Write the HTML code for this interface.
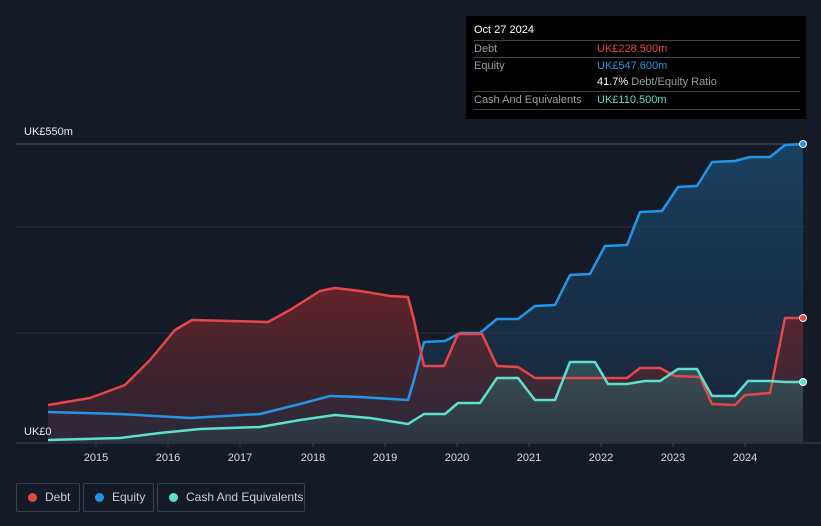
<!DOCTYPE html>
<html><head><meta charset="utf-8"><style>
html,body{margin:0;padding:0;background:#151b26;width:821px;height:526px;overflow:hidden;font-family:"Liberation Sans",sans-serif}
svg{position:absolute;left:0;top:0}
.tt{position:absolute;left:466px;top:16px;width:340px;height:103px;background:#000;color:#fff;font-size:11px}
.tt .row{position:absolute;left:8px;width:326px;border-top:1px solid #444;height:17px;line-height:17px}
.tt .l{color:#9a9ea5;position:absolute;left:0}
.tt .v{position:absolute;left:123px}
.leg{position:absolute;top:483px;height:27px;border:1px solid #3a404a;border-radius:2px;color:#c8ccd2;font-size:12px;line-height:27px}
.leg i{position:absolute;left:11px;top:9px;width:9px;height:9px;border-radius:50%}
.leg span{position:absolute;left:28px}
</style></head><body>
<svg width="821" height="526">
<defs>
<linearGradient id="eg" x1="0" y1="0" x2="0" y2="1"><stop offset="0" stop-color="#1a4a70" stop-opacity="0.8"/><stop offset="1" stop-color="#1a3048" stop-opacity="0.5"/></linearGradient>
<linearGradient id="dg" x1="0" y1="0" x2="0" y2="1"><stop offset="0" stop-color="#6a2328" stop-opacity="0.9"/><stop offset="1" stop-color="#3a2a38" stop-opacity="0.6"/></linearGradient>
<linearGradient id="cg" x1="0" y1="0" x2="0" y2="1"><stop offset="0" stop-color="#3a6a6a" stop-opacity="0.6"/><stop offset="1" stop-color="#2a3c44" stop-opacity="0.6"/></linearGradient>
</defs>
<g stroke="#2c323c" stroke-width="1">
<line x1="16" y1="144" x2="805" y2="144" stroke="#4a5058"/>
<line x1="16" y1="227" x2="805" y2="227"/>
<line x1="16" y1="333" x2="805" y2="333"/>
</g>
<path d="M48,412 L120,414 L190,418 L260,414 L300,404 L330,396 L360,397 L408,400 L414,380 L424,342 L445,341 L460,333 L480,333 L497,319 L518,319 L535,306 L555,305 L570,275 L590,274 L605,246 L627,245 L640,212 L662,211 L678,187 L697,186 L712,162 L735,161 L750,157 L770,157 L785,145 L803,144 L803,442 L48,442Z" fill="url(#eg)"/>
<path d="M48,405 L90,398 L125,385 L150,360 L175,330 L192,320 L230,321 L268,322 L290,310 L320,291 L335,288 L360,291 L390,296 L408,297 L414,320 L424,366 L444,366 L458,334 L482,334 L497,366 L518,367 L535,378 L627,378 L640,368 L660,368 L675,376 L700,377 L712,404 L735,405 L745,395 L770,393 L785,318 L803,318 L803,442 L48,442Z" fill="url(#dg)"/>
<path d="M48,440 L120,438 L160,433 L200,429 L260,427 L300,420 L335,415 L370,418 L408,424 L424,414 L445,414 L458,403 L480,403 L497,378 L518,378 L535,400 L555,400 L570,362 L595,362 L608,384 L627,384 L645,381 L660,381 L678,369 L697,369 L712,396 L735,396 L748,381 L770,381 L785,382 L803,382 L803,442 L48,442Z" fill="url(#cg)"/>
<g fill="none" stroke-width="2.5" stroke-linejoin="round">
<path d="M48,412 L120,414 L190,418 L260,414 L300,404 L330,396 L360,397 L408,400 L414,380 L424,342 L445,341 L460,333 L480,333 L497,319 L518,319 L535,306 L555,305 L570,275 L590,274 L605,246 L627,245 L640,212 L662,211 L678,187 L697,186 L712,162 L735,161 L750,157 L770,157 L785,145 L803,144" stroke="#2394e6"/>
<path d="M48,405 L90,398 L125,385 L150,360 L175,330 L192,320 L230,321 L268,322 L290,310 L320,291 L335,288 L360,291 L390,296 L408,297 L414,320 L424,366 L444,366 L458,334 L482,334 L497,366 L518,367 L535,378 L627,378 L640,368 L660,368 L675,376 L700,377 L712,404 L735,405 L745,395 L770,393 L785,318 L803,318" stroke="#e5464b"/>
<path d="M48,440 L120,438 L160,433 L200,429 L260,427 L300,420 L335,415 L370,418 L408,424 L424,414 L445,414 L458,403 L480,403 L497,378 L518,378 L535,400 L555,400 L570,362 L595,362 L608,384 L627,384 L645,381 L660,381 L678,369 L697,369 L712,396 L735,396 L748,381 L770,381 L785,382 L803,382" stroke="#5ddfcb"/>
</g>
<circle cx="803" cy="144" r="3.5" fill="#2394e6" stroke="#fff" stroke-width="1"/>
<circle cx="803" cy="318" r="3.5" fill="#e5464b" stroke="#fff" stroke-width="1"/>
<circle cx="803" cy="382" r="3.5" fill="#5ddfcb" stroke="#fff" stroke-width="1"/>
<line x1="16" y1="443" x2="821" y2="443" stroke="#3a404a"/>
<g stroke="#3a404a"><line x1="96" y1="443" x2="96" y2="447"/><line x1="168" y1="443" x2="168" y2="447"/><line x1="240" y1="443" x2="240" y2="447"/><line x1="313" y1="443" x2="313" y2="447"/><line x1="385" y1="443" x2="385" y2="447"/><line x1="457" y1="443" x2="457" y2="447"/><line x1="529" y1="443" x2="529" y2="447"/><line x1="601" y1="443" x2="601" y2="447"/><line x1="673" y1="443" x2="673" y2="447"/><line x1="745" y1="443" x2="745" y2="447"/></g>
<g fill="#d8dbe0" font-size="11" font-family="Liberation Sans,sans-serif" text-anchor="middle">
<text x="96" y="461">2015</text><text x="168" y="461">2016</text><text x="240" y="461">2017</text><text x="313" y="461">2018</text><text x="385" y="461">2019</text><text x="457" y="461">2020</text><text x="529" y="461">2021</text><text x="601" y="461">2022</text><text x="673" y="461">2023</text><text x="745" y="461">2024</text>
</g>
<text x="24" y="135" fill="#e8eaee" font-size="11" font-family="Liberation Sans,sans-serif">UK£550m</text>
<text x="24" y="435" fill="#e8eaee" font-size="11" font-family="Liberation Sans,sans-serif">UK£0</text>
</svg>
<div class="tt">
<div style="position:absolute;left:8px;top:8px;font-size:11px">Oct 27 2024</div>
<div class="row" style="top:24px"><span class="l">Debt</span><span class="v" style="color:#e5464b">UK£228.500m</span></div>
<div class="row" style="top:41px"><span class="l">Equity</span><span class="v" style="color:#2394e6">UK£547.600m</span></div>
<div class="row" style="top:58px;border-top:none"><span class="v">41.7% <span style="color:#9a9ea5">Debt/Equity Ratio</span></span></div>
<div class="row" style="top:75px"><span class="l">Cash And Equivalents</span><span class="v" style="color:#5ddfcb">UK£110.500m</span></div>
<div class="row" style="top:93px;height:0"></div>
</div>
<div class="leg" style="left:16px;width:62px"><i style="background:#e5464b"></i><span>Debt</span></div>
<div class="leg" style="left:83px;width:69px"><i style="background:#2394e6"></i><span>Equity</span></div>
<div class="leg" style="left:157px;width:146px"><i style="background:#5ddfcb"></i><span>Cash And Equivalents</span></div>
</body></html>
